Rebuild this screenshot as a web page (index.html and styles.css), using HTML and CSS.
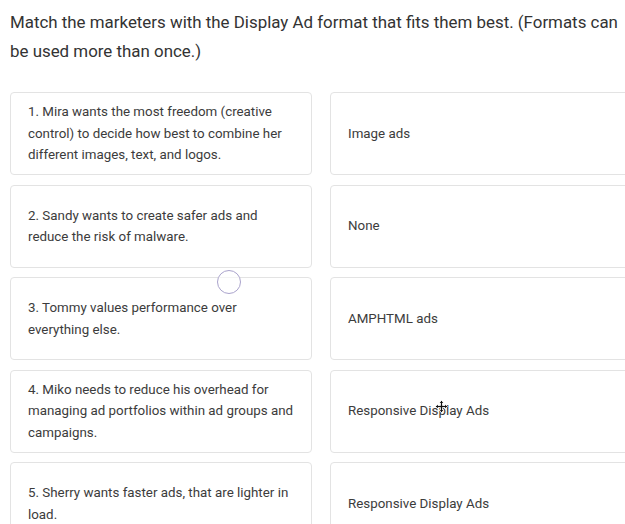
FILE: index.html
```html
<!DOCTYPE html>
<html lang="en">
  <head>
    <meta charset="UTF-8" />
    <title>Match the marketers</title>
    <link rel="stylesheet" href="styles.css">
  </head>
  <body>
    <div id="quiz">
      <div class="question">Match the marketers with the Display Ad format that fits them best. (Formats can be used more than once.)</div>

      <div class="match-grid">
        <div class="card">1. Mira wants the most freedom (creative control) to decide how best to combine her different images, text, and logos.</div>
        <div class="card answer">Image ads</div>

        <div class="card">2. Sandy wants to create safer ads and reduce the risk of malware.</div>
        <div class="card answer">None</div>

        <div class="card">3. Tommy values performance over everything else.</div>
        <div class="card answer">AMPHTML ads</div>

        <div class="card">4. Miko needs to reduce his overhead for managing ad portfolios within ad groups and campaigns.</div>
        <div class="card answer">Responsive Display Ads</div>

        <div class="card">5. Sherry wants faster ads, that are lighter in load.</div>
        <div class="card answer">Responsive Display Ads</div>
      </div>

      <!-- touch indicator and drag cursor from the recording -->
      <div class="touch-dot"></div>
      <svg class="move-cursor" width="13" height="13" viewBox="0 0 13 13">
        <path d="M6.5 0.5 L9 3 H7.5 V5.5 H10 V4 L12.5 6.5 L10 9 V7.5 H7.5 V10 H9 L6.5 12.5 L4 10 H5.5 V7.5 H3 V9 L0.5 6.5 L3 4 V5.5 H5.5 V3 H4 Z" fill="#111" stroke="#fff" stroke-width="0.8"/>
      </svg>
    </div>
  </body>
</html>
```

FILE: styles.css
```css
body {
  margin: 0;
  padding: 0;
  background-color: #ffffff;
  font-family: Roboto, "Liberation Sans", Arial, sans-serif;
  color: #3a3a3a;
  overflow: hidden;
}
#quiz {
  position: relative;
  width: 640px;
  padding: 8px 0 0 10px;
}
.question {
  width: 612px;
  font-size: 16.9px;
  line-height: 29px;
  color: #333333;
}
.match-grid {
  display: grid;
  grid-template-columns: 302px 302px;
  column-gap: 18px;
  row-gap: 9.5px;
  margin-top: 26px;
}
.card {
  box-sizing: border-box;
  height: 83px;
  display: flex;
  align-items: center;
  padding: 0 16px 0 17px;
  border: 1px solid #e3e3e3;
  border-radius: 4px;
  font-size: 13.35px;
  line-height: 21.5px;
  color: #3c3c3c;
}
.touch-dot {
  position: absolute;
  left: 217px;
  top: 270px;
  width: 22px;
  height: 22px;
  border: 1.5px solid #aaa3cc;
  border-radius: 50%;
  background-color: rgba(255, 255, 255, 0.6);
}
.move-cursor {
  position: absolute;
  left: 435px;
  top: 400px;
}
```
